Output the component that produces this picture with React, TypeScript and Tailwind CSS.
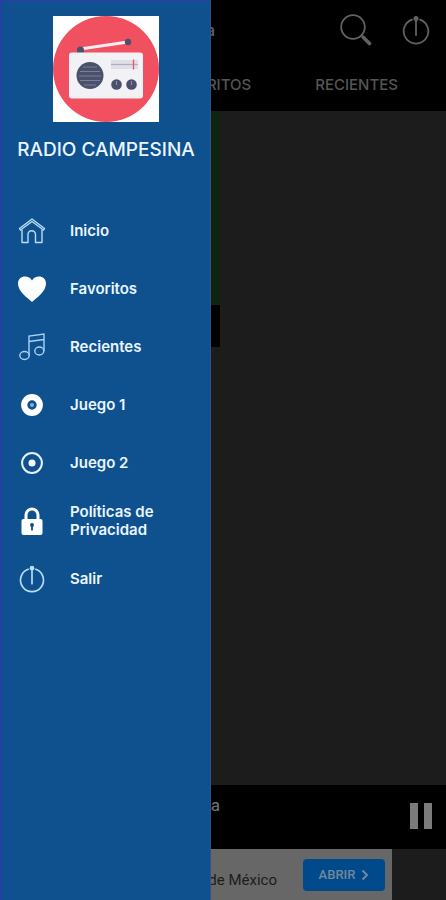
import type { ReactNode } from "react";

type MenuItem = {
  label: string;
  icon: ReactNode;
};

function PowerIcon({ className }: { className?: string }) {
  return (
    <svg viewBox="0 0 28 30" className={className} fill="none" aria-hidden="true">
      <path
        d="M10 4.6A12.300 12.300 0 1 0 18 4.6"
        stroke="currentColor"
        strokeWidth="1.8"
        strokeLinecap="round"
      />
      <path d="M14 4V20" stroke="currentColor" strokeWidth="1.8" strokeLinecap="round" />
      <circle cx="14" cy="3.4" r="2.5" fill="currentColor" />
    </svg>
  );
}

function SearchIcon() {
  return (
    <svg viewBox="0 0 32 32" className="size-8" fill="none" stroke="currentColor" aria-hidden="true">
      <circle cx="13" cy="13" r="11.8" strokeWidth="1.8" />
      <path d="M21 21L24 24" strokeWidth="1.8" />
      <path d="M23.500 23.500L29.5 29.5" strokeWidth="3.6" strokeLinecap="round" />
    </svg>
  );
}

function RadioLogo() {
  return (
    <svg viewBox="0 0 106 106" className="size-[106px]" role="img" aria-label="Radio">
      <rect width="106" height="106" fill="#fff" />
      <circle cx="53" cy="53" r="53" fill="#f0505f" />
      <path d="M27 33L75 26" stroke="#f6eef2" strokeWidth="3" />
      <path d="M24 37V34A3.5 3.5 0 0 1 31 34V37Z" fill="#4b506b" />
      <circle cx="75" cy="26" r="3.2" fill="#4b506b" />
      <rect x="16" y="36.500" width="74" height="46" rx="3" fill="#f1f1f6" />
      <circle cx="37" cy="59.500" r="13.500" fill="#4b506b" />
      <path
        d="M30 51H44M27 55.500H47M26 60H48M27 64.500H47M31 69H43"
        stroke="#7b7f98"
        strokeWidth="1.2"
      />
      <rect x="58" y="44" width="27" height="9" fill="#e0dfe8" />
      <path d="M58 48.500H85" stroke="#b0afbf" strokeWidth="1.2" />
      <path d="M80.500 43.500V53.500" stroke="#f0505f" strokeWidth="1.3" />
      <circle cx="63.500" cy="68.500" r="5.300" fill="#4b506b" />
      <circle cx="78.500" cy="68.500" r="5.300" fill="#4b506b" />
      <path d="M63.500 65V69M78.500 65V69" stroke="#8d90a6" strokeWidth="1.2" />
    </svg>
  );
}

const menuItems: MenuItem[] = [
  {
    label: "Inicio",
    icon: (
      <svg
        viewBox="0 0 28 28"
        className="size-7"
        fill="none"
        stroke="#b9dcf7"
        strokeWidth="1.4"
        strokeLinejoin="round"
        strokeLinecap="round"
      >
        <path d="M1.500 11.500L14 2L26.500 11.500L25.500 13L14 4.500L2.500 13Z" />
        <path d="M4 13V25.500H10V17.500A3.500 3.500 0 0 1 17.500 17.500V25.500H24V13" />
      </svg>
    ),
  },
  {
    label: "Favoritos",
    icon: (
      <svg viewBox="0 0 28 28" className="size-7" fill="#fff">
        <path d="M14 27C10 23 0 17 0 8.500C0 4 3.300 1.500 7 1.500C10 1.500 12.500 3 14 5.500C15.500 3 18 1.500 21 1.500C24.700 1.500 28 4 28 8.500C28 17 18 23 14 27Z" />
      </svg>
    ),
  },
  {
    label: "Recientes",
    icon: (
      <svg viewBox="0 0 28 28" className="size-7" fill="none" stroke="#a9d2f2" strokeWidth="1.4">
        <ellipse cx="6.500" cy="22.500" rx="4.700" ry="4" />
        <ellipse cx="21.300" cy="18" rx="4.500" ry="4" />
        <path d="M11 22.500V3L26 1V18M11 8.500L26 6.500" />
      </svg>
    ),
  },
  {
    label: "Juego 1",
    icon: (
      <svg viewBox="0 0 28 28" className="size-7">
        <circle cx="14" cy="14" r="7.800" fill="none" stroke="#fff" strokeWidth="6.200" />
        <circle cx="14" cy="14" r="2" fill="#7fb4e0" />
      </svg>
    ),
  },
  {
    label: "Juego 2",
    icon: (
      <svg viewBox="0 0 28 28" className="size-7">
        <circle cx="14" cy="14" r="9.900" fill="none" stroke="#e4f2ff" strokeWidth="2" />
        <circle cx="14" cy="14" r="3.500" fill="#fff" />
      </svg>
    ),
  },
  {
    label: "Políticas de Privacidad",
    icon: (
      <svg viewBox="0 0 28 28" className="size-7">
        <path
          d="M8 13V8A6 6 0 0 1 20 8V13"
          fill="none"
          stroke="#fff"
          strokeWidth="3"
        />
        <rect x="3.500" y="12" width="21" height="16" rx="2" fill="#fff" />
        <circle cx="14" cy="18" r="2" fill="#0f518f" />
        <path d="M14 18V23.500" stroke="#0f518f" strokeWidth="1.800" />
      </svg>
    ),
  },
  {
    label: "Salir",
    icon: <PowerIcon className="h-7 w-7 text-[#b9dcf7]" />,
  },
];

function Drawer() {
  return (
    <aside className="absolute inset-y-0 left-0 flex w-[211px] flex-col border-t-2 border-r border-l-2 border-t-[#23449f] border-r-[#3a4c8a] border-l-[#2440a2] bg-[#0f518f] pt-[14px]">
      <div className="flex flex-col items-center gap-4">
        <RadioLogo />
        <h1 className="text-[19px] leading-6 font-medium whitespace-nowrap text-[#eaf6ff]">
          RADIO CAMPESINA
        </h1>
      </div>
      <nav className="pt-10">
        <ul>
          {menuItems.map((item) => (
            <li key={item.label}>
              <a href="#" className="flex h-[58px] items-center gap-6 pr-8 pl-4">
                <span className="shrink-0">{item.icon}</span>
                <span className="text-[15px] leading-[18px] font-semibold text-[#eaf6ff]">
                  {item.label}
                </span>
              </a>
            </li>
          ))}
        </ul>
      </nav>
    </aside>
  );
}

export default function App() {
  return (
    <div className="relative flex min-h-screen flex-col overflow-hidden bg-[#1c1c1c] font-['Inter',sans-serif]">
      <header className="bg-black text-[#626262]">
        <div className="flex h-[60px] items-center pr-4">
          <div className="w-[215px] text-right text-base font-medium">Radio Campesina</div>
          <div className="ml-auto flex items-center gap-[30px]">
            <button type="button" aria-label="Buscar">
              <SearchIcon />
            </button>
            <button type="button" aria-label="Salir">
              <PowerIcon className="h-[30px] w-7" />
            </button>
          </div>
        </div>
        <div className="flex h-[51px] items-center justify-end gap-16 pr-12 text-[15px] font-medium text-[#555]">
          <button type="button">FAVORITOS</button>
          <button type="button">RECIENTES</button>
        </div>
      </header>

      <main className="flex-1">
        <div className="w-[220px]">
          <div className="h-[194px] bg-[#0d2410]" />
          <div className="h-[42px] bg-black" />
        </div>
      </main>

      <footer>
        <div className="flex h-16 items-start justify-between bg-black pt-2 pr-[14px]">
          <div className="w-[220px] text-right text-base font-medium text-[#6e6e6e]">
            Radio Campesina
          </div>
          <button type="button" aria-label="Pausar" className="pt-[10px]">
            <svg viewBox="0 0 22 26" className="h-[26px] w-[22px]" fill="#7b7b7b">
              <rect width="8" height="26" />
              <rect x="14" width="8" height="26" />
            </svg>
          </button>
        </div>
        <div className="mx-auto flex h-[51px] w-[338px] items-center justify-between bg-[#676767] pr-[7px]">
          <span className="w-[223px] pt-3 text-right font-['Roboto',sans-serif] text-[15px] text-[#1c1c1c]">
            Ciudad de México
          </span>
          <button
            type="button"
            className="flex h-8 w-[82px] items-center justify-center gap-[6px] rounded-sm bg-[#004a8c] font-['Roboto',sans-serif] text-[13px] font-medium text-[#73879b]"
          >
            ABRIR
            <svg viewBox="0 0 8 12" className="h-3 w-2" fill="none" stroke="currentColor" strokeWidth="2">
              <path d="M1.500 1.500L6 6L1.500 10.500" />
            </svg>
          </button>
        </div>
      </footer>

      <Drawer />
    </div>
  );
}
